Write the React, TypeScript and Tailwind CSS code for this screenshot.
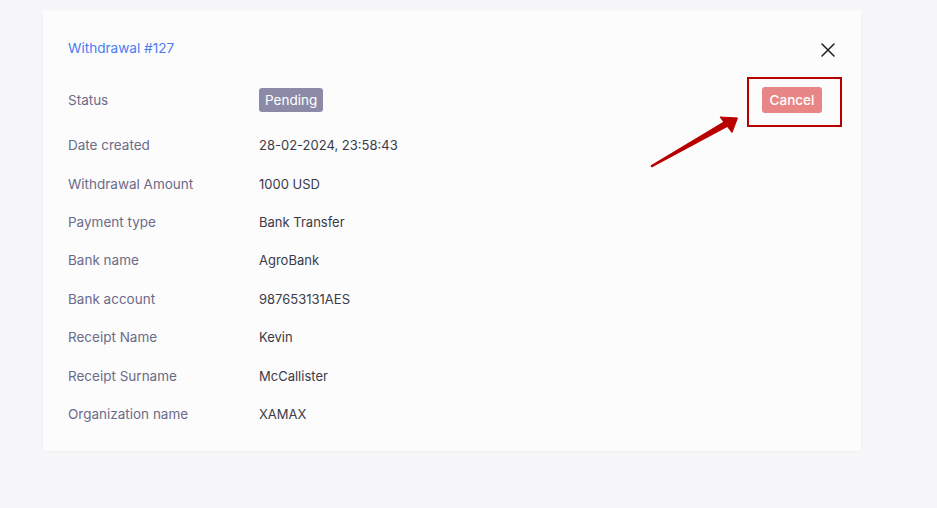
import React from "react";

const rows: [string, string][] = [
  ["Date created", "28-02-2024, 23:58:43"],
  ["Withdrawal Amount", "1000 USD"],
  ["Payment type", "Bank Transfer"],
  ["Bank name", "AgroBank"],
  ["Bank account", "987653131AES"],
  ["Receipt Name", "Kevin"],
  ["Receipt Surname", "McCallister"],
  ["Organization name", "XAMAX"],
];

export default function App() {
  return (
    <div
      className="w-[937px] h-[508px] bg-[#f7f7fa] pt-[10px] pl-[43px] overflow-hidden"
      style={{ fontFamily: "Inter, 'Noto Sans', sans-serif" }}
    >
      <div className="relative w-[818px] h-[441px] bg-[#fcfcfd] shadow-[0_1px_4px_rgba(0,0,0,0.03)] pl-[25px] pr-[26px] pt-[26px]">
        <div className="flex items-center justify-between h-[24px]">
          <span className="text-[13.6px] text-[#4a7cf0]">Withdrawal #127</span>
          <svg width="14" height="14" viewBox="0 0 14 14" className="mt-[4px]">
            <path d="M1 1L13 13M13 1L1 13" stroke="#1f1f25" strokeWidth="1.5" strokeLinecap="round" />
          </svg>
        </div>
        <div className="mt-[21px] flex flex-col">
          <div className="flex items-center h-[38px] mb-[7px]">
            <span className="w-[191px] text-[13.5px] leading-[20px] text-[#6b6b88]">Status</span>
            <span className="h-[24px] px-[6px] flex items-center rounded-[3px] bg-[#8b8ba8] text-white text-[13.5px]">
              Pending
            </span>
            <button className="ml-auto mr-[13px] h-[26px] w-[60px] rounded-[3px] bg-[#e88686] text-white text-[13.5px] font-medium">
              Cancel
            </button>
          </div>
          {rows.map(([k, v]) => (
            <div key={k} className="flex items-center h-[38.4px]">
              <span className="w-[191px] text-[13.5px] leading-[20px] text-[#6b6b88]">{k}</span>
              <span className="text-[13px] leading-[20px] text-[#3b3b48]">{v}</span>
            </div>
          ))}
        </div>
        <div className="absolute left-[704px] top-[67px] w-[95px] h-[50px] border-2 border-[#b40000] pointer-events-none" />
        <svg
          className="absolute left-[600px] top-[100px] pointer-events-none"
          width="110"
          height="70"
          viewBox="0 0 110 70"
        >
          <polygon points="8.3,55 9.7,57.1 84.8,16.8 81.2,11.2" fill="#b80000" />
          <circle cx="9" cy="56" r="1.3" fill="#b80000" />
          <polygon points="77,7 94.5,8 89,22.5" fill="#b80000" stroke="#b80000" strokeWidth="1" strokeLinejoin="round" />
        </svg>
      </div>
    </div>
  );
}
